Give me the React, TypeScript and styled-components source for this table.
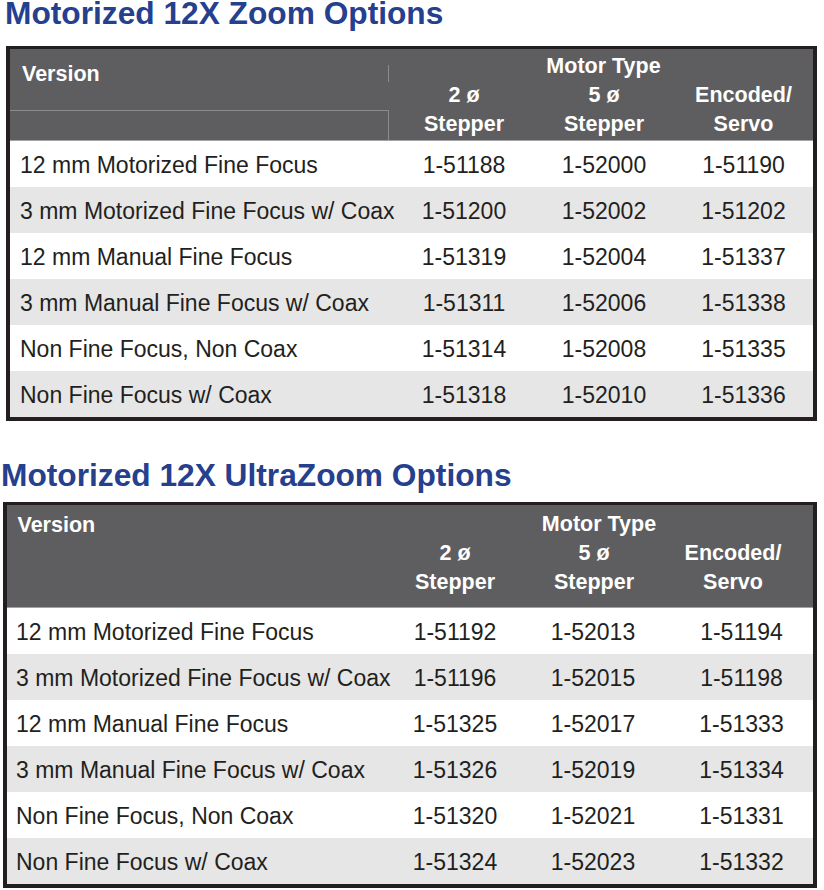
import React from "react";
import styled, { createGlobalStyle } from "styled-components";

const Global = createGlobalStyle`
  html, body { margin: 0; padding: 0; background: #ffffff; }
  body { font-family: "Liberation Sans", Arial, Helvetica, sans-serif; color: #231f20; }
  * { box-sizing: border-box; }
`;

const Page = styled.div`
  width: 824px;
  display: flex;
  flex-direction: column;
  align-items: flex-start;
`;

const Title = styled.h2<{ $indent: number; $top: number }>`
  margin: ${(p) => p.$top}px 0 0 0;
  padding-left: ${(p) => p.$indent}px;
  font-size: 31.7px;
  line-height: 26px;
  font-weight: 700;
  color: #24408e;
  white-space: nowrap;
`;

const TableBox = styled.div<{ $top: number; $left: number; $width: number }>`
  margin-top: ${(p) => p.$top}px;
  margin-left: ${(p) => p.$left}px;
  width: ${(p) => p.$width}px;
  border-style: solid;
  border-color: #231f20;
  border-width: 3px 4px 4px 4px;
  display: flex;
  flex-direction: column;
`;

const HeadRow = styled.div<{ $cols: string }>`
  display: grid;
  grid-template-columns: ${(p) => p.$cols};
  grid-template-rows: auto auto;
  background: #5e5e60;
  color: #ffffff;
  font-weight: 700;
  font-size: 21.5px;
  border-bottom: 1px solid #a2a2a4;
`;

const VersionHead = styled.div`
  grid-column: 1;
  grid-row: 1 / span 2;
  display: flex;
  flex-direction: column;
  margin-right: 5px;
`;

const VersionLabel = styled.div<{ $pt: number; $pl: number; $lh: number; $split: boolean }>`
  position: relative;
  flex: 1;
  padding-top: ${(p) => p.$pt}px;
  padding-left: ${(p) => p.$pl}px;
  line-height: ${(p) => p.$lh}px;
  border-bottom: ${(p) => (p.$split ? "1px solid #8c8c8e" : "none")};
  &::after {
    content: "";
    display: ${(p) => (p.$split ? "block" : "none")};
    position: absolute;
    right: 0;
    top: 16px;
    width: 1px;
    height: 17px;
    background: #8c8c8e;
  }
`;

const VersionGap = styled.div`
  height: 29px;
  border-right: 1px solid #8c8c8e;
`;

const MotorType = styled.div<{ $pt: number; $lh: number }>`
  grid-column: 2 / span 3;
  grid-row: 1;
  text-align: center;
  padding-top: ${(p) => p.$pt}px;
  line-height: ${(p) => p.$lh}px;
`;

const TypeCell = styled.div<{ $pb: number; $lh: number; $shift: number }>`
  grid-row: 2;
  text-align: center;
  line-height: ${(p) => p.$lh}px;
  padding-bottom: ${(p) => p.$pb}px;
  padding-left: ${(p) => (p.$shift > 0 ? p.$shift * 2 : 0)}px;
  padding-right: ${(p) => (p.$shift < 0 ? -p.$shift * 2 : 0)}px;
  white-space: nowrap;
`;

const BodyRow = styled.div<{ $cols: string; $shade: boolean }>`
  display: grid;
  grid-template-columns: ${(p) => p.$cols};
  height: 46px;
  background: ${(p) => (p.$shade ? "#e6e6e6" : "#ffffff")};
  font-size: 23px;
  color: #231f20;
`;

const NameCell = styled.div<{ $pl: number }>`
  padding-top: 2px;
  padding-left: ${(p) => p.$pl}px;
  line-height: 44px;
  white-space: nowrap;
`;

const NumCell = styled.div<{ $shift: number }>`
  padding-top: 2px;
  line-height: 44px;
  text-align: center;
  white-space: nowrap;
  padding-left: ${(p) => (p.$shift > 0 ? p.$shift * 2 : 0)}px;
  padding-right: ${(p) => (p.$shift < 0 ? -p.$shift * 2 : 0)}px;
`;

type Row = [string, string, string, string];

interface TableSpec {
  title: string;
  titleTop: number;
  titleIndent: number;
  top: number;
  left: number;
  width: number;
  cols: string;
  split: boolean;
  versionPt: number;
  versionPl: number;
  headPt: number;
  headPb: number;
  headLh: number;
  headShift: number[];
  bodyShift: number[];
  namePl: number;
  rows: Row[];
}

const tables: TableSpec[] = [
  {
    title: "Motorized 12X Zoom Options",
    titleTop: 0,
    titleIndent: 5,
    top: 20,
    left: 6,
    width: 811,
    cols: "384px 140px 140px 139px",
    split: true,
    versionPt: 10.75,
    versionPl: 12,
    headPt: 3,
    headPb: 1,
    headLh: 29,
    headShift: [0, 0, 0],
    bodyShift: [0, 0, 0],
    namePl: 10,
    rows: [
      ["12 mm Motorized Fine Focus", "1-51188", "1-52000", "1-51190"],
      ["3 mm Motorized Fine Focus w/ Coax", "1-51200", "1-52002", "1-51202"],
      ["12 mm Manual Fine Focus", "1-51319", "1-52004", "1-51337"],
      ["3 mm Manual Fine Focus w/ Coax", "1-51311", "1-52006", "1-51338"],
      ["Non Fine Focus, Non Coax", "1-51314", "1-52008", "1-51335"],
      ["Non Fine Focus w/ Coax", "1-51318", "1-52010", "1-51336"],
    ],
  },
  {
    title: "Motorized 12X UltraZoom Options",
    titleTop: 41,
    titleIndent: 1,
    top: 14,
    left: 3,
    width: 814,
    cols: "378px 140px 136px 152px",
    split: false,
    versionPt: 6,
    versionPl: 10.5,
    headPt: 5,
    headPb: 9.4,
    headLh: 29.2,
    headShift: [0, 1, -4],
    bodyShift: [0, 0, 4.5],
    namePl: 9,
    rows: [
      ["12 mm Motorized Fine Focus", "1-51192", "1-52013", "1-51194"],
      ["3 mm Motorized Fine Focus w/ Coax", "1-51196", "1-52015", "1-51198"],
      ["12 mm Manual Fine Focus", "1-51325", "1-52017", "1-51333"],
      ["3 mm Manual Fine Focus w/ Coax", "1-51326", "1-52019", "1-51334"],
      ["Non Fine Focus, Non Coax", "1-51320", "1-52021", "1-51331"],
      ["Non Fine Focus w/ Coax", "1-51324", "1-52023", "1-51332"],
    ],
  },
];

const motorTypes: [string, string][] = [
  ["2 ø", "Stepper"],
  ["5 ø", "Stepper"],
  ["Encoded/", "Servo"],
];

function OptionsTable({ spec }: { spec: TableSpec }) {
  return (
    <>
      <Title $indent={spec.titleIndent} $top={spec.titleTop}>
        {spec.title}
      </Title>
      <TableBox $top={spec.top} $left={spec.left} $width={spec.width}>
        <HeadRow $cols={spec.cols}>
          <VersionHead>
            <VersionLabel
              $pt={spec.versionPt}
              $pl={spec.versionPl}
              $lh={spec.headLh}
              $split={spec.split}
            >
              Version
            </VersionLabel>
            {spec.split && <VersionGap />}
          </VersionHead>
          <MotorType $pt={spec.headPt} $lh={spec.headLh}>
            Motor Type
          </MotorType>
          {motorTypes.map(([a, b], i) => (
            <TypeCell key={a} $pb={spec.headPb} $lh={spec.headLh} $shift={spec.headShift[i]}>
              {a}
              <br />
              {b}
            </TypeCell>
          ))}
        </HeadRow>
        {spec.rows.map((r, i) => (
          <BodyRow key={r[0]} $cols={spec.cols} $shade={i % 2 === 1}>
            <NameCell $pl={spec.namePl}>{r[0]}</NameCell>
            <NumCell $shift={spec.bodyShift[0]}>{r[1]}</NumCell>
            <NumCell $shift={spec.bodyShift[1]}>{r[2]}</NumCell>
            <NumCell $shift={spec.bodyShift[2]}>{r[3]}</NumCell>
          </BodyRow>
        ))}
      </TableBox>
    </>
  );
}

export default function App() {
  return (
    <Page>
      <Global />
      {tables.map((t) => (
        <OptionsTable key={t.title} spec={t} />
      ))}
    </Page>
  );
}
